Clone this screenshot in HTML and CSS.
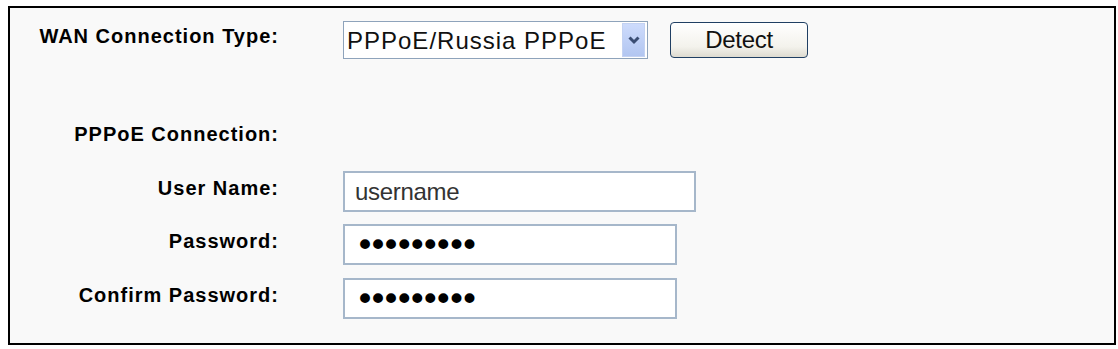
FILE: index.html
```html
<!DOCTYPE html>
<html lang="en">

<head>
  <meta charset="UTF-8" />
  <meta name="viewport" content="width=device-width, initial-scale=1.0" />
  <title>WAN</title>
  <link rel="stylesheet" href="styles.css">
</head>

<body>
  <div class="wan">
    <div class="row row-type">
      <label class="label" for="wantype">WAN Connection Type:</label>
      <div class="field">
        <span class="select">
          <select id="wantype" class="select-input">
            <option>PPPoE/Russia PPPoE</option>
          </select>
          <span class="select-arrow">
            <svg width="14" height="10" viewBox="0 0 14 10">
              <path d="M2.5 2.5 L7 7 L11.5 2.5" fill="none" stroke="#3a4d73" stroke-width="3" />
            </svg>
          </span>
        </span>
        <button class="btn" type="button">Detect</button>
      </div>
    </div>

    <div class="row row-title">
      <span class="label">PPPoE Connection:</span>
    </div>

    <div class="row row-user">
      <label class="label" for="user">User Name:</label>
      <div class="field">
        <input id="user" class="text text-wide" type="text" value="username" />
      </div>
    </div>

    <div class="row row-pass">
      <label class="label" for="pwd">Password:</label>
      <div class="field">
        <input id="pwd" class="text pass" type="password" value="123456789" />
      </div>
    </div>

    <div class="row row-confirm">
      <label class="label" for="pwd2">Confirm Password:</label>
      <div class="field">
        <input id="pwd2" class="text pass" type="password" value="123456789" />
      </div>
    </div>
  </div>
</body>

</html>
```

FILE: styles.css
```css
* {
  margin: 0;
  padding: 0;
  box-sizing: border-box;
}

body {
  background: #fff;
  font-family: "Liberation Sans", Arial, sans-serif;
}

.wan {
  width: 1108px;
  height: 339px;
  margin: 6px 0 0 8px;
  padding-top: 13px;
  border: 2px solid #000;
  background: #f9f9f9;
  display: flex;
  flex-direction: column;
}

.row {
  display: flex;
  align-items: flex-start;
}

.label {
  width: 269px;
  flex-shrink: 0;
  padding-top: 5px;
  text-align: right;
  font-size: 20px;
  line-height: 24px;
  font-weight: bold;
  letter-spacing: 1px;
  color: #000;
}

.field {
  margin-left: 64px;
  display: flex;
  align-items: center;
}

.row-type .label {
  padding-top: 3px;
}

.row-title {
  margin-top: 63px;
}

.row-title .label {
  padding-top: 0;
}

.row-user {
  margin-top: 25px;
}

.row-pass {
  margin-top: 12px;
}

.row-confirm {
  margin-top: 13px;
}

/* select */
.select {
  width: 305px;
  height: 38px;
  display: flex;
  align-items: center;
  padding: 1px 2px 1px 0;
  border: 1px solid #8ea3bb;
  background: #fff;
}

.select-input {
  flex: 1;
  height: 100%;
  padding-left: 3px;
  border: none;
  outline: none;
  background: transparent;
  appearance: none;
  -webkit-appearance: none;
  font-family: "Liberation Sans", Arial, sans-serif;
  font-size: 24px;
  letter-spacing: 1px;
  color: #111;
}

.select-arrow {
  width: 23px;
  height: 34px;
  display: flex;
  align-items: center;
  justify-content: center;
  background: linear-gradient(#cddbfc, #b2c6f1);
  border: 1px solid #c3d2f2;
}

/* button */
.btn {
  width: 138px;
  height: 36px;
  margin-left: 22px;
  border: 1px solid #203f63;
  border-radius: 4px;
  background: linear-gradient(#ffffff, #f3f2ec 70%, #dedbd0);
  font-family: "Liberation Sans", Arial, sans-serif;
  font-size: 24px;
  letter-spacing: -0.3px;
  color: #111;
}

/* inputs */
.text {
  width: 334px;
  height: 41px;
  padding-left: 10px;
  border: 2px solid #a6b7ca;
  background: #fff;
  outline: none;
  font-family: "Liberation Sans", Arial, sans-serif;
  font-size: 24px;
  letter-spacing: -0.3px;
  color: #333;
}

.text-wide {
  width: 353px;
}

.pass {
  font-family: "DejaVu Sans", sans-serif;
  font-size: 34px;
  letter-spacing: -7px;
  color: #000;
}
```
